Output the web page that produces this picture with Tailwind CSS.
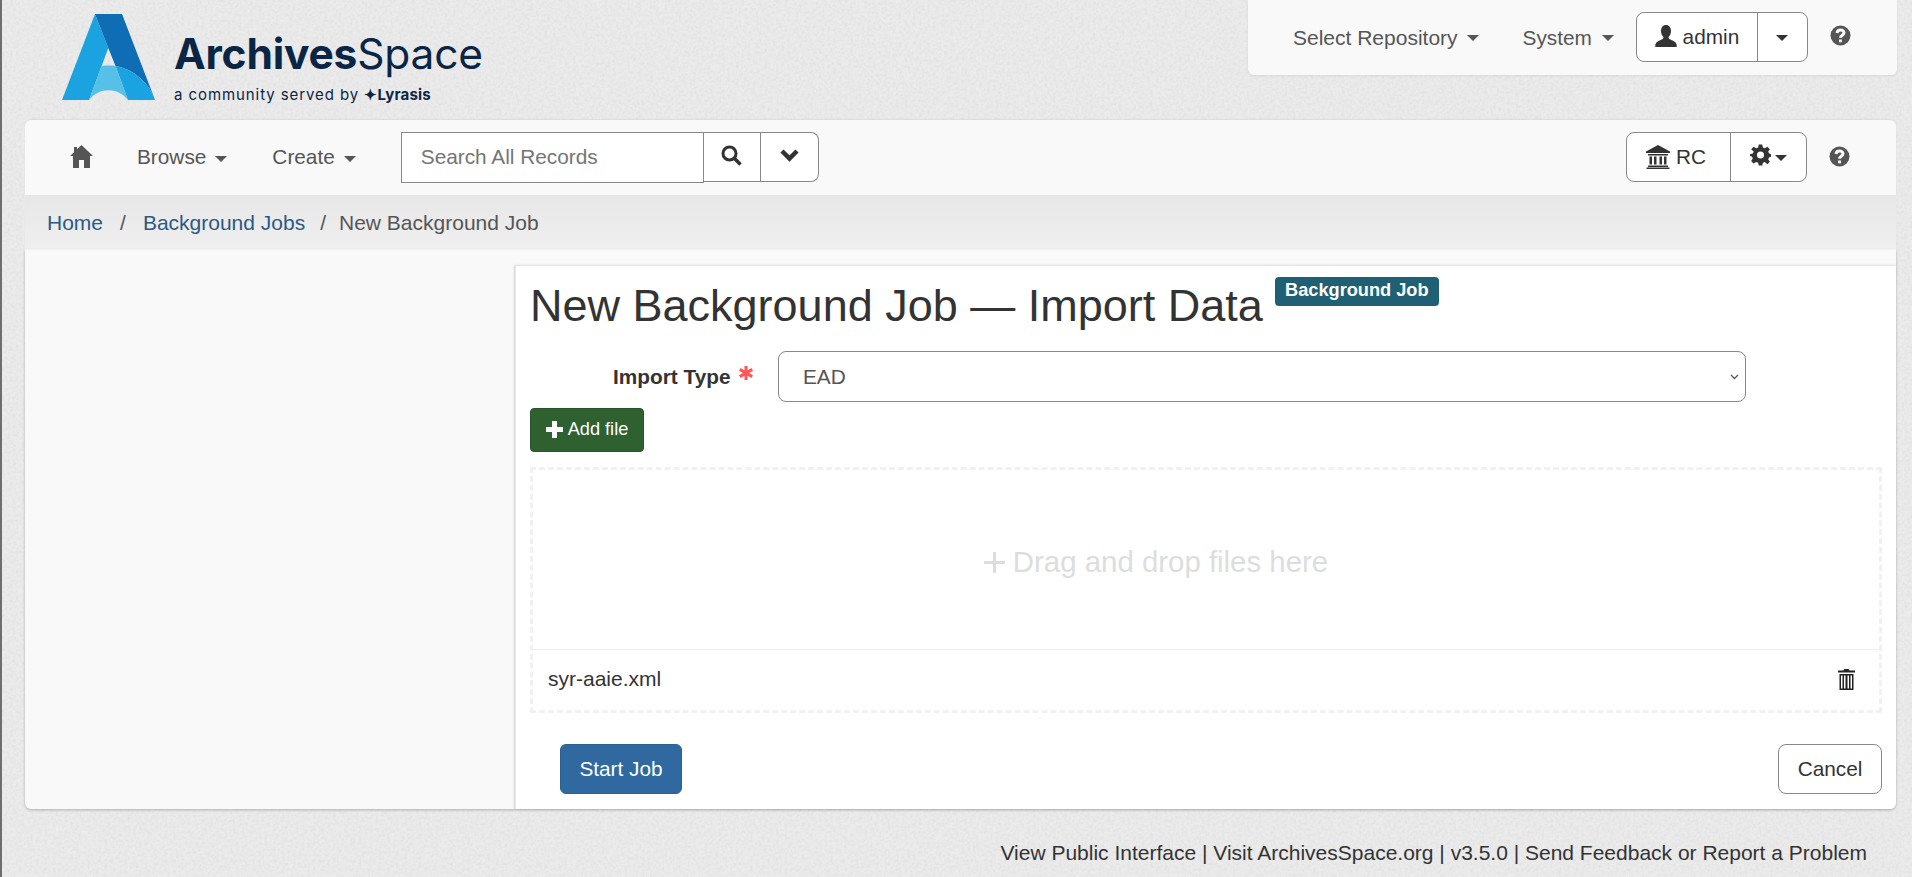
<!DOCTYPE html>
<html><head><meta charset="utf-8">
<script src="https://cdn.jsdelivr.net/npm/@tailwindcss/browser@4"></script>
<title>ArchivesSpace</title></head>
<body class="m-0 overflow-hidden">
<div class="relative isolate w-[1912px] h-[877px] overflow-hidden bg-[#ebebeb] border-l-2 border-[#6e6e6e] font-['Liberation_Sans',Arial,sans-serif] text-[20.8px] text-[#333]">
  <!-- paper grain of the page background -->
  <svg class="absolute inset-0 -z-10 w-full h-full" aria-hidden="true">
    <filter id="grain" x="0" y="0" width="100%" height="100%">
      <feTurbulence type="fractalNoise" baseFrequency="0.35" numOctaves="3" seed="4"/>
      <feColorMatrix type="matrix" values="0 0 0 0 0.55  0 0 0 0 0.55  0 0 0 0 0.55  0.45 0 0 0 -0.17"/>
    </filter>
    <rect width="100%" height="100%" filter="url(#grain)"/>
  </svg>

  <!-- header -->
  <header class="flex h-[120px] items-start">
    <a class="flex items-start ml-[60px] mt-[14px]">
      <svg class="w-[93px] h-[86px] shrink-0" viewBox="62 14 93 86">
        <path fill="#1aa3e0" d="M95 14 L108.3 48 L89 100 L62 100 Z"/>
        <path fill="#0f6db5" d="M95 14 H122 L155 100 C150 84 134 69 115.5 66 L108.3 48 Z"/>
        <path fill="#1aa3e0" d="M115.5 66 C134 69 150 84 155 100 H128 Z"/>
        <path fill="#56c0e8" d="M101.6 66 C106 65.4 111 65.4 115.5 66 L128 100 C118 87 99 87 89 100 Z"/>
      </svg>
      <div class="ml-[19px] text-[#0b2545] font-['Inter',sans-serif]">
        <div class="text-[42.5px] leading-[52px] mt-[14px] tracking-[-0.2px] whitespace-nowrap"><span class="font-bold">Archives</span><span class="font-normal">Space</span></div>
        <div class="text-[15px] leading-[18px] mt-[6px] tracking-[0.92px] whitespace-nowrap">a community served by <span class="font-bold tracking-[0.2px]">✦Lyrasis</span></div>
      </div>
    </a>
    <div class="ml-auto mr-[15px] w-[649px] h-[75px] bg-[#f9f9f9] rounded-b-md shadow-[0_1px_3px_rgba(0,0,0,0.08)] flex items-center text-[#555] pb-[1px]">
      <span class="ml-[45px] mt-[2px] text-[21px]">Select Repository</span>
      <i class="ml-[9px] mt-[2px] border-x-[6px] border-t-[6px] border-x-transparent border-t-[#555]"></i>
      <span class="ml-[44px] mt-[2px]">System</span>
      <i class="ml-[10px] mt-[2px] border-x-[6px] border-t-[6px] border-x-transparent border-t-[#555]"></i>
      <div class="ml-[22px] flex h-[50px] w-[172px] bg-white border border-[#888] rounded-lg text-[#333]">
        <div class="w-[121px] border-r border-[#888] flex items-center justify-center">
          <svg class="w-[22px] h-[24px] mr-[6px] -mt-[3px]" viewBox="0 0 22 24"><path fill="#333" d="M11 1c3.2 0 5 2.6 5 6 0 2.6-1 4.6-2.300 6-.4.9 0 1.800 1 2.300 3 1.300 6 2.300 7 5.200V23H.300v-2.500c1-2.900 4-3.900 7-5.200 1-.5 1.400-1.400 1-2.300C7 11.600 6 9.600 6 7c0-3.400 1.800-6 5-6z"/></svg>
          <span class="-mt-[1px]">admin</span>
        </div>
        <div class="flex-1 flex items-center justify-center"><i class="border-x-[6px] border-t-[6px] border-x-transparent border-t-[#333] mt-[2px]"></i></div>
      </div>
      <svg class="ml-[22px] w-[21px] h-[21px] -mt-[3px]" viewBox="0 0 21 21"><circle cx="10.500" cy="10.500" r="10" fill="#555"/><path fill="none" stroke="#f9f9f9" stroke-width="3" d="M7 8c.2-2 1.600-3 3.500-3s3.500 1.100 3.500 2.800c0 2.600-3.500 2.400-3.500 5"/><rect x="9" y="14.500" width="3" height="2.800" fill="#f9f9f9"/></svg>
    </div>
  </header>

  <!-- toolbar -->
  <nav class="ml-[23px] w-[1871px] h-[75px] bg-[#f9f9f9] rounded-t-md shadow-[0_-1px_2px_rgba(0,0,0,0.06)] flex items-center text-[#555]">
    <svg class="ml-[45px] w-[23px] h-[23px] -mt-[2px]" viewBox="0 0 23 23"><path fill="#555" d="M11.500 0 23 11H20V23H14V15H9V23H3V11H0L4 7.200V2H7V4.300z"/></svg>
    <span class="ml-[44px] -mt-[2px]">Browse</span>
    <i class="ml-[9px] mt-[2px] border-x-[6px] border-t-[6px] border-x-transparent border-t-[#555]"></i>
    <span class="ml-[45px] -mt-[2px]">Create</span>
    <i class="ml-[9px] mt-[2px] border-x-[6px] border-t-[6px] border-x-transparent border-t-[#555]"></i>
    <div class="ml-[45px] w-[303px] h-[51px] -mt-[1px] bg-white border border-[#888] pl-[19px] flex items-center text-[#757575]">Search All Records</div>
    <div class="flex h-[50px] w-[115px] -mt-[2px] bg-white border border-l-0 border-[#888] rounded-r-lg">
      <div class="w-[57px] border-r border-[#888] flex items-center justify-center">
        <svg class="w-[21px] h-[21px] -mt-[2px]" viewBox="0 0 21 21"><circle cx="8.500" cy="8.500" r="6.500" fill="none" stroke="#333" stroke-width="3"/><path stroke="#333" stroke-width="3.500" d="M13 13l6.500 6.500"/></svg>
      </div>
      <div class="flex-1 flex items-center justify-center">
        <svg class="w-[19px] h-[14px] -mt-[4px]" viewBox="0 0 19 14"><path fill="none" stroke="#333" stroke-width="4.500" d="M2 3l7.500 7.500L17 3"/></svg>
      </div>
    </div>
    <div class="ml-auto flex h-[50px] w-[181px] -mt-[2px] bg-white border border-[#888] rounded-lg text-[#333] mr-[22px]">
      <div class="w-[104px] border-r border-[#888] flex items-center justify-center pr-[5px]">
        <svg class="w-[24px] h-[25px] mr-[6px]" viewBox="0 0 24 25"><path fill="#333" d="M12 1 24 7.500V9H0V7.500zM2 10h20v1.500H2zM3.500 12.500h2.500v8H3.500zM8 12.500h2.500v8H8zM13.500 12.500H16v8h-2.500zM18 12.500h2.500v8H18zM2 21.500h20V23H2zM.500 23.500h23V25H.500z"/></svg>
        <span>RC</span>
      </div>
      <div class="flex-1 flex items-center justify-center">
        <svg class="w-[21px] h-[24px] -mt-[3px]" viewBox="0 0 24 24"><path fill="#333" fill-rule="evenodd" d="M10 0h4l.7 3.300 2.300.9L19.900 2.500 22.700 5.300 20.800 8.100l1 2.300L24 11v3l-2.200.7-1 2.300 1.900 2.800-2.800 2.800L17 19.900l-2.300.9L14 24h-4l-.7-3.200L7 19.900 4.100 21.600 1.300 18.800 3.200 16l-1-2.300L0 13v-2l3.200-.7 1-2.300L1.300 5.300 4.100 2.500 7 4.200l2.300-.9zM12 8a4 4 0 1 0 0 8 4 4 0 0 0 0-8z"/></svg>
        <i class="ml-[4px] mt-[2px] border-x-[6px] border-t-[6px] border-x-transparent border-t-[#333]"></i>
      </div>
    </div>
    <svg class="mr-[46px] w-[21px] h-[21px] -mt-[3px]" viewBox="0 0 21 21"><circle cx="10.500" cy="10.500" r="10" fill="#555"/><path fill="none" stroke="#f9f9f9" stroke-width="3" d="M7 8c.2-2 1.600-3 3.500-3s3.500 1.100 3.500 2.800c0 2.600-3.500 2.400-3.500 5"/><rect x="9" y="14.500" width="3" height="2.800" fill="#f9f9f9"/></svg>
  </nav>

  <!-- breadcrumb -->
  <div class="ml-[23px] w-[1871px] h-[55px] bg-gradient-to-b from-[#e7e7e7] to-[#efefef] border-b border-[#fafafa] flex items-center pl-[22px] pt-[2px] text-[21px]">
    <span class="text-[#2a5a84]">Home</span>
    <span class="ml-[17px] text-[#555]">/</span>
    <span class="ml-[17px] text-[#2a5a84]">Background Jobs</span>
    <span class="ml-[15px] text-[#555]">/</span>
    <span class="ml-[13px] text-[#555]">New Background Job</span>
  </div>

  <!-- content -->
  <div class="ml-[23px] w-[1871px] h-[559px] bg-[#f9f9f9] pt-[15px] rounded-b-md shadow-[0_1px_3px_rgba(0,0,0,0.25)]">
    <main class="ml-[490px] w-[1381px] h-[544px] bg-white rounded-br-md border-t border-l border-[#e6e6e6] shadow-[-1px_0_2px_rgba(0,0,0,0.15)] pl-[14px] pr-[14px] flex flex-col">
      <div class="flex items-start h-[76px]">
        <h1 class="text-[45px] leading-[54px] mt-[13px] font-normal whitespace-nowrap">New Background Job — Import Data</h1>
        <span class="ml-[12px] mt-[11px] h-[29px] w-[164px] rounded bg-[#1f6074] text-white font-bold text-[18.2px] leading-[27px] text-center whitespace-nowrap">Background Job</span>
      </div>
      <div class="flex items-center h-[51px] mt-[9px]">
        <label class="ml-[83px] w-[118px] font-bold whitespace-nowrap">Import Type</label>
        <span class="ml-[8px] w-[14px] h-[14px] -mt-[7px]">
          <svg class="w-[14px] h-[14px]" viewBox="0 0 14 14"><path stroke="#f55" stroke-width="3" d="M7 0v14M.800 3.400l12.400 7.200M13.200 3.400 .800 10.600"/></svg>
        </span>
        <div class="ml-[25px] w-[968px] h-[51px] border border-[#888] rounded-lg bg-white flex items-center pl-[24px] pr-[6px] text-[#555]">
          <span>EAD</span>
          <svg class="ml-auto w-[9px] h-[6px]" viewBox="0 0 9 6"><path fill="none" stroke="#555" stroke-width="1.300" d="M1 1l3.500 3.500L8 1"/></svg>
        </div>
      </div>
      <button class="mt-[6px] w-[114px] h-[44px] rounded bg-[#2f6030] border border-[#29532a] text-white text-[18.2px] flex items-center justify-center">
        <svg class="w-[17px] h-[17px] mr-[5px] -mt-[2px]" viewBox="0 0 17 17"><path fill="#fff" d="M6 0h5v6h6v5h-6v6H6v-6H0V6h6z"/></svg>Add file
      </button>
      <div class="mt-[15px] w-[1352px] h-[246px] border-[3px] border-dashed border-[#f1f1f1] flex flex-col">
        <div class="h-[180px] border-b border-[#f1f1f1] flex items-center justify-center text-[#ddd] text-[29.4px] pt-[6px] pr-[100px]">
          <svg class="w-[21px] h-[21px] mr-[8px]" viewBox="0 0 21 21"><path fill="#ddd" d="M9 0h3v9h9v3h-9v9H9v-9H0V9h9z"/></svg>Drag and drop files here
        </div>
        <div class="flex-1 flex items-center pl-[15px] pr-[24px] pb-[2px]">
          <span class="text-[21px]">syr-aaie.xml</span>
          <svg class="ml-auto w-[17px] h-[21px]" viewBox="0 0 17 21"><path fill="#222" d="M5.500 1.500 6.500 0h4l1 1.500H17V3.500H0V1.500zM1.500 5h14v16h-14zM3 6.500v13h1.500v-13zM6 6.500v13h1.500v-13zM9.500 6.500v13H11v-13zM12.500 6.500v13H14v-13z"/></svg>
        </div>
      </div>
      <div class="flex mt-[31px]">
        <button class="ml-[30px] w-[122px] h-[50px] rounded-md bg-[#30699f] border border-[#2b6090] text-white">Start Job</button>
        <button class="ml-auto w-[104px] h-[50px] rounded-lg bg-white border border-[#888] text-[#333]">Cancel</button>
      </div>
    </main>
  </div>

  <footer class="mt-[31px] pr-[45px] text-right whitespace-nowrap leading-[26px] text-[21px]">View Public Interface | Visit ArchivesSpace.org | v3.5.0 | Send Feedback or Report a Problem</footer>
</div>
</body></html>
